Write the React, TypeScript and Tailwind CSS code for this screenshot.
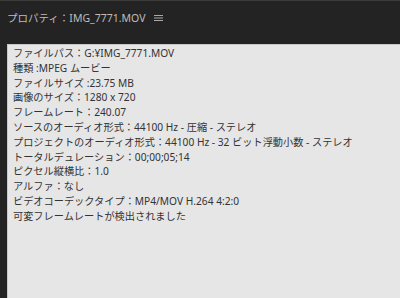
const lines = [
  "ファイルパス：G:¥IMG_7771.MOV",
  "種類 :MPEG ムービー",
  "ファイルサイズ :23.75 MB",
  "画像のサイズ：1280 x 720",
  "フレームレート：240.07",
  "ソースのオーディオ形式：44100 Hz - 圧縮 - ステレオ",
  "プロジェクトのオーディオ形式：44100 Hz - 32 ビット浮動小数 - ステレオ",
  "トータルデュレーション：00;00;05;14",
  "ピクセル縦横比：1.0",
  "アルファ：なし",
  "ビデオコーデックタイプ：MP4/MOV H.264 4:2:0",
  "可変フレームレートが検出されました",
];

export default function App() {
  return (
    <div
      className="flex h-[298px] w-[400px] flex-col overflow-hidden bg-[#232323]"
      style={{ fontFamily: '"Noto Sans", "Noto Sans CJK JP", sans-serif' }}
    >
      <div className="flex h-[44px] items-center gap-[8px] border-t border-[#3a3a3a] pl-[7px] pb-[10px]">
        <span className="text-[10.5px] leading-[14px] text-[#bdbdbd]">プロパティ：IMG_7771.MOV</span>
        <svg width="9" height="6" viewBox="0 0 9 6" className="mt-[1px] text-[#a8a8a8]">
          <path d="M0 0.5H9M0 3H9M0 5.5H9" stroke="currentColor" strokeWidth="1" />
        </svg>
      </div>
      <div className="ml-[7px] flex-1 border-t border-l border-[#c8c8c8] bg-[#e6e6e6] pl-[5px] pt-[1px]">
        {lines.map((l) => (
          <div key={l} className="h-[14.8px] whitespace-nowrap text-[10.2px] leading-[14.8px] text-[#333]">
            {l}
          </div>
        ))}
      </div>
    </div>
  );
}
